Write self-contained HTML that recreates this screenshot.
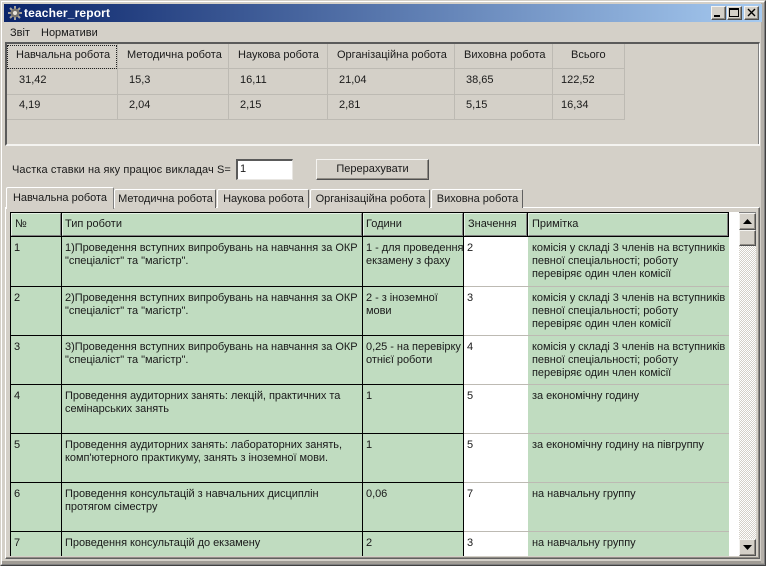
<!DOCTYPE html>
<html><head><meta charset="utf-8"><style>
html,body{margin:0;padding:0;background:#d4d0c8}
#w{position:relative;width:766px;height:566px;overflow:hidden;background:#d4d0c8;font:11px/13px "Liberation Sans",sans-serif;color:#1a1a1a}
#w div{position:absolute;box-sizing:border-box}
.t{white-space:nowrap}
.c{background:#c0dcc0;padding:5px 0 0 3px;white-space:nowrap;letter-spacing:-.04px}
.h{background:#c0dcc0;padding:4px 0 0 2px;border-right:1px solid #808080;border-bottom:1px solid #808080;border-left:1px solid #e4f0e4;border-top:1px solid #e4f0e4;white-space:nowrap}
.v{background:#fff;padding:5px 0 0 3px}
.k{background:#000}
.g{background:#bdbab3}
.btn{background:#d4d0c8;border-top:1px solid #f4f3f0;border-left:1px solid #f4f3f0;border-right:1px solid #505050;border-bottom:1px solid #505050;box-shadow:inset -1px -1px 0 #908c85}
.tab{background:#d4d0c8;border-top:1px solid #fff;border-left:1px solid #fff;border-right:1px solid #606060;text-align:center;white-space:nowrap;height:19px;top:189px;padding:3px 0 0 1px;border-radius:2px 2px 0 0}
</style></head><body><div id="w">
<!-- window frame -->
<div style="left:0;top:0;width:766px;height:566px;border:1px solid #404040;border-top-color:#d4d0c8;border-left-color:#d4d0c8"></div>
<div style="left:1px;top:1px;width:764px;height:564px;border:1px solid #808080;border-top-color:#fff;border-left-color:#fff"></div>
<div style="left:2px;top:561px;width:762px;height:3px;background:#a09c95"></div>
<div style="left:761px;top:3px;width:3px;height:560px;background:#b4b0a9"></div>
<!-- title -->
<div style="left:4px;top:4px;width:758px;height:18px;background:linear-gradient(90deg,#0a246a,#a6caf0)"></div>
<svg style="position:absolute;left:7px;top:5px" width="16" height="16" viewBox="0 0 16 16"><g stroke="#a8a49c" stroke-width="2"><path d="M8 1V15M1 8H15M3 3L13 13M13 3L3 13"/></g><circle cx="8" cy="8" r="4.5" fill="#77736c"/><circle cx="8" cy="8" r="2" fill="#e8e4dc"/></svg>
<div class="t" style="left:24px;top:6px;color:#fff;font-weight:bold;font-size:12px;line-height:14px;letter-spacing:.15px">teacher_report</div>
<div class="btn" style="left:711px;top:6px;width:15px;height:14px"></div><div class="k" style="left:714px;top:15px;width:6px;height:2px"></div>
<div class="btn" style="left:727px;top:6px;width:15px;height:14px"></div><div style="left:729px;top:8px;width:10px;height:9px;border:1px solid #000;border-top-width:2px"></div>
<div class="btn" style="left:744px;top:6px;width:15px;height:14px"></div>
<svg style="position:absolute;left:747px;top:8px" width="9" height="9"><path d="M1 1L8 8M8 1L1 8" stroke="#000" stroke-width="1.4"/></svg>
<!-- menu -->
<div class="t" style="left:10px;top:26px;line-height:14px">Звіт</div>
<div class="t" style="left:41px;top:26px;line-height:14px">Нормативи</div>
<!-- top panel -->
<div style="left:5px;top:42px;width:755px;height:104px;border:2px solid #5a5a5a;border-right:1px solid #fff;border-bottom:2px solid #f4f3f0"></div>
<div style="left:758px;top:44px;width:1px;height:100px;background:#808080"></div>
<div class="g" style="left:7px;top:68px;width:618px;height:1px"></div>
<div class="g" style="left:7px;top:94px;width:618px;height:1px"></div>
<div class="g" style="left:7px;top:119px;width:618px;height:1px"></div>
<div class="g" style="left:117px;top:44px;width:1px;height:75px"></div>
<div class="g" style="left:228px;top:44px;width:1px;height:75px"></div>
<div class="g" style="left:327px;top:44px;width:1px;height:75px"></div>
<div class="g" style="left:454px;top:44px;width:1px;height:75px"></div>
<div class="g" style="left:552px;top:44px;width:1px;height:75px"></div>
<div class="g" style="left:624px;top:44px;width:1px;height:75px"></div>
<div style="left:7px;top:45px;width:110px;height:24px;border:1px dotted #222"></div>
<div class="t" style="left:16px;top:49px">Навчальна робота</div>
<div class="t" style="left:127px;top:49px">Методична робота</div>
<div class="t" style="left:238px;top:49px">Наукова робота</div>
<div class="t" style="left:337px;top:49px">Організаційна робота</div>
<div class="t" style="left:464px;top:49px">Виховна робота</div>
<div class="t" style="left:571px;top:49px">Всього</div>
<div class="t" style="left:19px;top:74px">31,42</div><div class="t" style="left:129px;top:74px">15,3</div><div class="t" style="left:240px;top:74px">16,11</div><div class="t" style="left:339px;top:74px">21,04</div><div class="t" style="left:466px;top:74px">38,65</div><div class="t" style="left:561px;top:74px">122,52</div>
<div class="t" style="left:19px;top:99px">4,19</div><div class="t" style="left:129px;top:99px">2,04</div><div class="t" style="left:240px;top:99px">2,15</div><div class="t" style="left:339px;top:99px">2,81</div><div class="t" style="left:466px;top:99px">5,15</div><div class="t" style="left:561px;top:99px">16,34</div>
<!-- form row -->
<div class="t" style="left:12px;top:164px;letter-spacing:.1px">Частка ставки на яку працює викладач S=</div>
<div style="left:236px;top:159px;width:57px;height:21px;background:#fff;border:2px solid #5a5a5a;border-right:1px solid #e8e6e2;border-bottom:1px solid #e8e6e2;padding:2px 0 0 2px">1</div>
<div class="btn" style="left:316px;top:159px;width:113px;height:21px;text-align:center;padding-top:3px">Перерахувати</div>
<!-- tab page -->
<div style="left:5px;top:207px;width:755px;height:352px;border-top:1px solid #fff;border-left:1px solid #fff;border-right:1px solid #606060;border-bottom:1px solid #606060;box-shadow:inset -1px -1px 0 #908c85"></div>
<div class="tab" style="left:114px;width:102px">Методична робота</div>
<div class="tab" style="left:217px;width:92px">Наукова робота</div>
<div class="tab" style="left:310px;width:120px">Організаційна робота</div>
<div class="tab" style="left:431px;width:92px">Виховна робота</div>
<div class="tab" style="left:6px;top:187px;width:108px;height:22px;padding:4px 0 0 0;border-right:1px solid #808080">Навчальна робота</div>
<!-- grid -->
<div style="left:10px;top:212px;width:746px;height:344px;background:#fff;border-top:1px solid #808080;border-left:1px solid #808080"></div>
<div class="k" style="left:10px;top:212px;width:719px;height:344px"></div>
<div style="left:464px;top:237px;width:265px;height:319px;background:#bdbab3"></div>
<!-- header -->
<div class="h" style="left:11px;top:213px;width:50px;height:23px;padding-left:3px">№</div>
<div class="h" style="left:62px;top:213px;width:300px;height:23px">Тип роботи</div>
<div class="h" style="left:363px;top:213px;width:100px;height:23px">Години</div>
<div class="h" style="left:464px;top:213px;width:63px;height:23px;padding-left:3px">Значення</div>
<div class="h" style="left:528px;top:213px;width:200px;height:23px;padding-left:3px">Примітка</div>
<!-- row1 -->
<div class="c" style="left:11px;top:237px;width:50px;height:49px">1</div>
<div class="c" style="left:62px;top:237px;width:300px;height:49px">1)Проведення вступних випробувань на навчання за ОКР<br>"спеціаліст" та "магістр".</div>
<div class="c" style="left:363px;top:237px;width:100px;height:49px">1 - для проведення<br>екзамену з фаху</div>
<div class="v" style="left:464px;top:237px;width:64px;height:49px">2</div>
<div class="c" style="left:528px;top:237px;width:201px;height:49px;padding-left:4px">комісія у складі 3 членів на вступників<br>певної спеціальності; роботу<br>перевіряє один член комісії</div>
<!-- row2 -->
<div class="c" style="left:11px;top:287px;width:50px;height:48px">2</div>
<div class="c" style="left:62px;top:287px;width:300px;height:48px">2)Проведення вступних випробувань на навчання за ОКР<br>"спеціаліст" та "магістр".</div>
<div class="c" style="left:363px;top:287px;width:100px;height:48px">2 - з іноземної<br>мови</div>
<div class="v" style="left:464px;top:287px;width:64px;height:48px">3</div>
<div class="c" style="left:528px;top:287px;width:201px;height:48px;padding-left:4px">комісія у складі 3 членів на вступників<br>певної спеціальності; роботу<br>перевіряє один член комісії</div>
<!-- row3 -->
<div class="c" style="left:11px;top:336px;width:50px;height:48px">3</div>
<div class="c" style="left:62px;top:336px;width:300px;height:48px">3)Проведення вступних випробувань на навчання за ОКР<br>"спеціаліст" та "магістр".</div>
<div class="c" style="left:363px;top:336px;width:100px;height:48px">0,25 - на перевірку<br>отнієї роботи</div>
<div class="v" style="left:464px;top:336px;width:64px;height:48px">4</div>
<div class="c" style="left:528px;top:336px;width:201px;height:48px;padding-left:4px">комісія у складі 3 членів на вступників<br>певної спеціальності; роботу<br>перевіряє один член комісії</div>
<!-- row4 -->
<div class="c" style="left:11px;top:385px;width:50px;height:48px">4</div>
<div class="c" style="left:62px;top:385px;width:300px;height:48px">Проведення аудиторних занять: лекцій, практичних та<br>семінарських занять</div>
<div class="c" style="left:363px;top:385px;width:100px;height:48px">1</div>
<div class="v" style="left:464px;top:385px;width:64px;height:48px">5</div>
<div class="c" style="left:528px;top:385px;width:201px;height:48px;padding-left:4px">за економічну годину</div>
<!-- row5 -->
<div class="c" style="left:11px;top:434px;width:50px;height:48px">5</div>
<div class="c" style="left:62px;top:434px;width:300px;height:48px">Проведення аудиторних занять: лабораторних занять,<br>комп'ютерного практикуму, занять з іноземної мови.</div>
<div class="c" style="left:363px;top:434px;width:100px;height:48px">1</div>
<div class="v" style="left:464px;top:434px;width:64px;height:48px">5</div>
<div class="c" style="left:528px;top:434px;width:201px;height:48px;padding-left:4px">за економічну годину на півгруппу</div>
<!-- row6 -->
<div class="c" style="left:11px;top:483px;width:50px;height:48px">6</div>
<div class="c" style="left:62px;top:483px;width:300px;height:48px">Проведення консультацій з навчальних дисциплін<br>протягом сіместру</div>
<div class="c" style="left:363px;top:483px;width:100px;height:48px">0,06</div>
<div class="v" style="left:464px;top:483px;width:64px;height:48px">7</div>
<div class="c" style="left:528px;top:483px;width:201px;height:48px;padding-left:4px">на навчальну группу</div>
<!-- row7 -->
<div class="c" style="left:11px;top:532px;width:50px;height:24px">7</div>
<div class="c" style="left:62px;top:532px;width:300px;height:24px">Проведення консультацій до екзамену</div>
<div class="c" style="left:363px;top:532px;width:100px;height:24px">2</div>
<div class="v" style="left:464px;top:532px;width:64px;height:24px">3</div>
<div class="c" style="left:528px;top:532px;width:201px;height:24px;padding-left:4px">на навчальну группу</div>
<!-- scrollbar -->
<div style="left:729px;top:212px;width:10px;height:344px;background:#fff"></div>
<div style="left:739px;top:213px;width:17px;height:343px;background:repeating-conic-gradient(#d4d0c8 0 25%,#fff 0 50%) 0 0/2px 2px"></div>
<div class="btn" style="left:739px;top:213px;width:17px;height:17px"></div>
<svg style="position:absolute;left:743px;top:219px" width="9" height="5"><path d="M4.5 0L9 5H0Z" fill="#000"/></svg>
<div class="btn" style="left:739px;top:230px;width:17px;height:16px"></div>
<div class="btn" style="left:739px;top:539px;width:17px;height:17px"></div>
<svg style="position:absolute;left:743px;top:545px" width="9" height="5"><path d="M0 0H9L4.5 5Z" fill="#000"/></svg>
</div></body></html>
